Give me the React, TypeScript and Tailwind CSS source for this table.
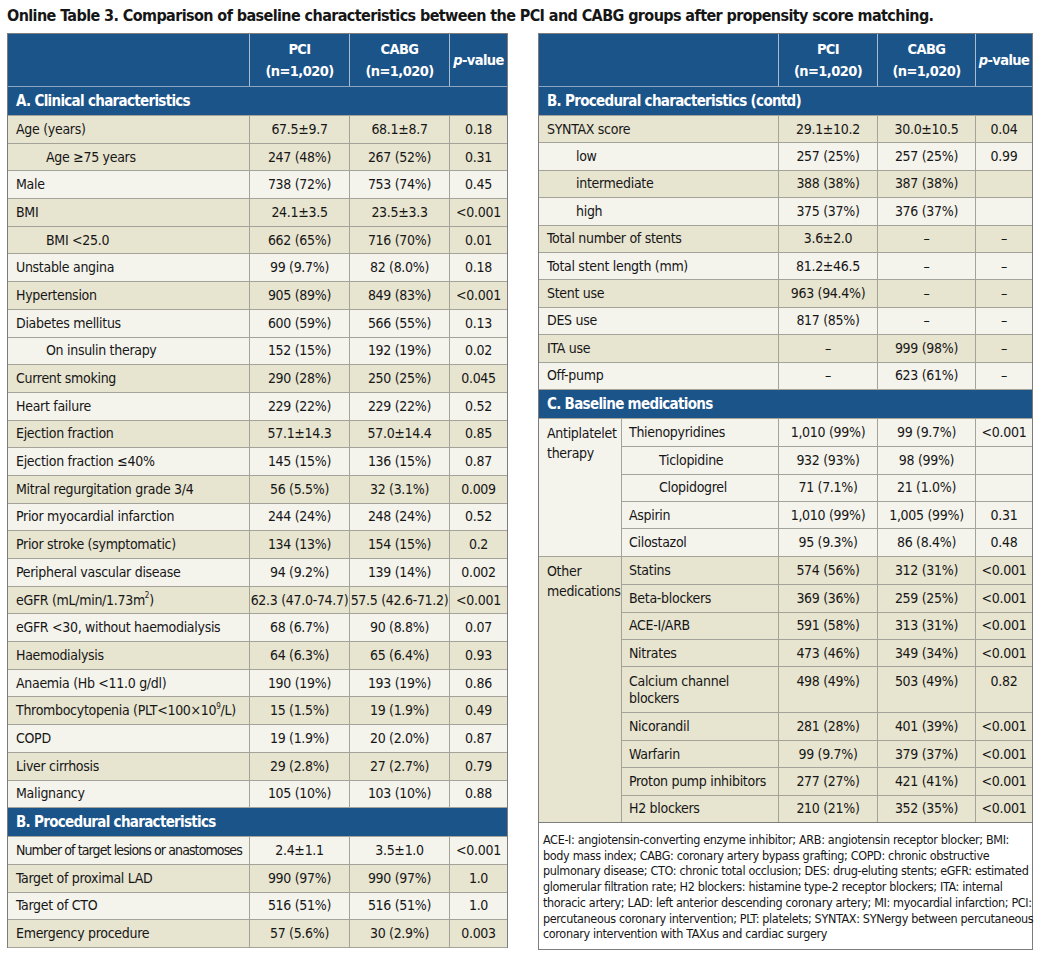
import React from "react";

type R = { l: React.ReactNode; a: string; b: string; p: string; c: 0 | 1; i?: boolean; tall?: boolean; t?: boolean };

const leftA: R[] = [
  { l: "Age (years)", a: "67.5±9.7", b: "68.1±8.7", p: "0.18", c: 1 },
  { l: "Age ≥75 years", a: "247 (48%)", b: "267 (52%)", p: "0.31", c: 1, i: true },
  { l: "Male", a: "738 (72%)", b: "753 (74%)", p: "0.45", c: 0 },
  { l: "BMI", a: "24.1±3.5", b: "23.5±3.3", p: "<0.001", c: 1 },
  { l: "BMI <25.0", a: "662 (65%)", b: "716 (70%)", p: "0.01", c: 1, i: true },
  { l: "Unstable angina", a: "99 (9.7%)", b: "82 (8.0%)", p: "0.18", c: 0 },
  { l: "Hypertension", a: "905 (89%)", b: "849 (83%)", p: "<0.001", c: 1 },
  { l: "Diabetes mellitus", a: "600 (59%)", b: "566 (55%)", p: "0.13", c: 0 },
  { l: "On insulin therapy", a: "152 (15%)", b: "192 (19%)", p: "0.02", c: 0, i: true },
  { l: "Current smoking", a: "290 (28%)", b: "250 (25%)", p: "0.045", c: 1 },
  { l: "Heart failure", a: "229 (22%)", b: "229 (22%)", p: "0.52", c: 0 },
  { l: "Ejection fraction", a: "57.1±14.3", b: "57.0±14.4", p: "0.85", c: 1 },
  { l: "Ejection fraction ≤40%", a: "145 (15%)", b: "136 (15%)", p: "0.87", c: 0 },
  { l: "Mitral regurgitation grade 3/4", a: "56 (5.5%)", b: "32 (3.1%)", p: "0.009", c: 1 },
  { l: "Prior myocardial infarction", a: "244 (24%)", b: "248 (24%)", p: "0.52", c: 0 },
  { l: "Prior stroke (symptomatic)", a: "134 (13%)", b: "154 (15%)", p: "0.2", c: 1 },
  { l: "Peripheral vascular disease", a: "94 (9.2%)", b: "139 (14%)", p: "0.002", c: 0 },
  {
    l: (
      <>
        eGFR (mL/min/1.73m<sup className="text-[8px]">2</sup>)
      </>
    ),
    a: "62.3 (47.0-74.7)",
    b: "57.5 (42.6-71.2)",
    p: "<0.001",
    c: 1,
  },
  { l: "eGFR <30, without haemodialysis", a: "68 (6.7%)", b: "90 (8.8%)", p: "0.07", c: 0 },
  { l: "Haemodialysis", a: "64 (6.3%)", b: "65 (6.4%)", p: "0.93", c: 1 },
  { l: "Anaemia (Hb <11.0 g/dl)", a: "190 (19%)", b: "193 (19%)", p: "0.86", c: 0 },
  {
    l: (
      <>
        Thrombocytopenia (PLT&lt;100×10<sup className="text-[8px]">9</sup>/L)
      </>
    ),
    a: "15 (1.5%)",
    b: "19 (1.9%)",
    p: "0.49",
    c: 1,
  },
  { l: "COPD", a: "19 (1.9%)", b: "20 (2.0%)", p: "0.87", c: 0 },
  { l: "Liver cirrhosis", a: "29 (2.8%)", b: "27 (2.7%)", p: "0.79", c: 1 },
  { l: "Malignancy", a: "105 (10%)", b: "103 (10%)", p: "0.88", c: 0 },
];

const leftB: R[] = [
  { l: "Number of target lesions or anastomoses", a: "2.4±1.1", b: "3.5±1.0", p: "<0.001", c: 0, t: true },
  { l: "Target of proximal LAD", a: "990 (97%)", b: "990 (97%)", p: "1.0", c: 1 },
  { l: "Target of CTO", a: "516 (51%)", b: "516 (51%)", p: "1.0", c: 0 },
  { l: "Emergency procedure", a: "57 (5.6%)", b: "30 (2.9%)", p: "0.003", c: 1 },
];

const rightB: R[] = [
  { l: "SYNTAX score", a: "29.1±10.2", b: "30.0±10.5", p: "0.04", c: 1 },
  { l: "low", a: "257 (25%)", b: "257 (25%)", p: "0.99", c: 0, i: true },
  { l: "intermediate", a: "388 (38%)", b: "387 (38%)", p: "", c: 1, i: true },
  { l: "high", a: "375 (37%)", b: "376 (37%)", p: "", c: 0, i: true },
  { l: "Total number of stents", a: "3.6±2.0", b: "–", p: "–", c: 1 },
  { l: "Total stent length (mm)", a: "81.2±46.5", b: "–", p: "–", c: 0 },
  { l: "Stent use", a: "963 (94.4%)", b: "–", p: "–", c: 1 },
  { l: "DES use", a: "817 (85%)", b: "–", p: "–", c: 0 },
  { l: "ITA use", a: "–", b: "999 (98%)", p: "–", c: 1 },
  { l: "Off-pump", a: "–", b: "623 (61%)", p: "–", c: 0 },
];

const anti: R[] = [
  { l: "Thienopyridines", a: "1,010 (99%)", b: "99 (9.7%)", p: "<0.001", c: 0 },
  { l: "Ticlopidine", a: "932 (93%)", b: "98 (99%)", p: "", c: 0, i: true },
  { l: "Clopidogrel", a: "71 (7.1%)", b: "21 (1.0%)", p: "", c: 0, i: true },
  { l: "Aspirin", a: "1,010 (99%)", b: "1,005 (99%)", p: "0.31", c: 0 },
  { l: "Cilostazol", a: "95 (9.3%)", b: "86 (8.4%)", p: "0.48", c: 0 },
];

const other: R[] = [
  { l: "Statins", a: "574 (56%)", b: "312 (31%)", p: "<0.001", c: 1 },
  { l: "Beta-blockers", a: "369 (36%)", b: "259 (25%)", p: "<0.001", c: 1 },
  { l: "ACE-I/ARB", a: "591 (58%)", b: "313 (31%)", p: "<0.001", c: 1 },
  { l: "Nitrates", a: "473 (46%)", b: "349 (34%)", p: "<0.001", c: 1 },
  {
    l: (
      <>
        Calcium channel
        <br />
        blockers
      </>
    ),
    a: "498 (49%)",
    b: "503 (49%)",
    p: "0.82",
    c: 1,
    tall: true,
  },
  { l: "Nicorandil", a: "281 (28%)", b: "401 (39%)", p: "<0.001", c: 1 },
  { l: "Warfarin", a: "99 (9.7%)", b: "379 (37%)", p: "<0.001", c: 1 },
  { l: "Proton pump inhibitors", a: "277 (27%)", b: "421 (41%)", p: "<0.001", c: 1 },
  { l: "H2 blockers", a: "210 (21%)", b: "352 (35%)", p: "<0.001", c: 1 },
];

const CELL = "flex items-center justify-center whitespace-nowrap border-l border-[#a4a39a]";

function LeftRow({ r }: { r: R }) {
  return (
    <div
      className={
        "grid grid-cols-[241px_100px_100px_58px] h-[27.7px] border-b border-[#a4a39a] " +
        (r.c ? "bg-[#e7e4cf]" : "bg-[#f4f3ec]")
      }
    >
      <div
        className={
          "flex items-center whitespace-nowrap " +
          (r.i ? "pl-[38px]" : "pl-[8px]") +
          (r.t ? " tracking-[-0.9px]" : "")
        }
      >
        {r.l}
      </div>
      <div className={CELL}>{r.a}</div>
      <div className={CELL}>{r.b}</div>
      <div className={CELL}>{r.p}</div>
    </div>
  );
}

function RightRow({ r }: { r: R }) {
  return (
    <div
      className={
        "grid grid-cols-[239px_99px_98px_57px] h-[27.4px] border-b border-[#a4a39a] " +
        (r.c ? "bg-[#e7e4cf]" : "bg-[#f4f3ec]")
      }
    >
      <div className={"flex items-center whitespace-nowrap " + (r.i ? "pl-[37px]" : "pl-[8px]")}>{r.l}</div>
      <div className={CELL}>{r.a}</div>
      <div className={CELL}>{r.b}</div>
      <div className={CELL}>{r.p}</div>
    </div>
  );
}

function MedRow({ r }: { r: R }) {
  const al = r.tall ? "items-start pt-[6px] leading-[17px]" : "items-center";
  return (
    <div
      className={
        "grid grid-cols-[156px_99px_98px_57px] border-t border-[#a4a39a] first:border-t-0 " +
        (r.tall ? "h-[46px]" : "h-[27.4px]")
      }
    >
      <div className={"flex whitespace-nowrap " + al + " " + (r.i ? "pl-[37px]" : "pl-[7px]")}>
        <span>{r.l}</span>
      </div>
      <div className={"flex justify-center whitespace-nowrap border-l border-[#a4a39a] " + al}>{r.a}</div>
      <div className={"flex justify-center whitespace-nowrap border-l border-[#a4a39a] " + al}>{r.b}</div>
      <div className={"flex justify-center whitespace-nowrap border-l border-[#a4a39a] " + al}>{r.p}</div>
    </div>
  );
}

function Header({ cols }: { cols: string }) {
  return (
    <div
      className={
        "grid h-[53px] bg-[#1b5489] text-white font-bold text-[14.5px] tracking-[-0.6px] leading-[22px] border-b border-[#8ea5c1] " +
        cols
      }
    >
      <div />
      <div className="flex flex-col items-center justify-center border-l border-[#a9bcd2] whitespace-nowrap">
        <span>PCI</span>
        <span>(n=1,020)</span>
      </div>
      <div className="flex flex-col items-center justify-center border-l border-[#a9bcd2] whitespace-nowrap">
        <span>CABG</span>
        <span>(n=1,020)</span>
      </div>
      <div className="flex items-center justify-center border-l border-[#a9bcd2] whitespace-nowrap">
        <span>
          <i>p</i>-value
        </span>
      </div>
    </div>
  );
}

function Bar({ children }: { children: React.ReactNode }) {
  return (
    <div className="h-[29px] bg-[#1b5489] text-white font-bold text-[15px] tracking-[-0.7px] flex items-center pl-[8px] border-b border-[#a4a39a] whitespace-nowrap">
      {children}
    </div>
  );
}

export default function App() {
  return (
    <div className="w-[1050px] h-[953px] overflow-hidden bg-white text-[#161616] font-['DejaVu_Sans_Condensed','Liberation_Sans_Narrow',sans-serif] text-[14px] tracking-[-0.3px]">
      <div className="h-[33px] pl-[7px] pt-[4px] text-[16px] tracking-[-0.6px] font-bold leading-[24px] whitespace-nowrap">
        Online Table 3. Comparison of baseline characteristics between the PCI and CABG groups after propensity score matching.
      </div>
      <div className="flex items-start pl-[7px] gap-[30px]">
        {/* Left table */}
        <div className="w-[501px] border-x border-t border-[#7d7d7d]">
          <Header cols="grid-cols-[241px_100px_100px_58px]" />
          <Bar>A. Clinical characteristics</Bar>
          {leftA.map((r, k) => (
            <LeftRow key={k} r={r} />
          ))}
          <Bar>B. Procedural characteristics</Bar>
          {leftB.map((r, k) => (
            <LeftRow key={k} r={r} />
          ))}
        </div>

        {/* Right table */}
        <div className="w-[495px] border-x border-t border-[#7d7d7d]">
          <Header cols="grid-cols-[239px_99px_98px_57px]" />
          <Bar>B. Procedural characteristics (contd)</Bar>
          {rightB.map((r, k) => (
            <RightRow key={k} r={r} />
          ))}
          <Bar>C. Baseline medications</Bar>
          <div className="flex bg-[#f4f3ec] border-b border-[#a4a39a]">
            <div className="w-[82px] pl-[8px] pt-[4px] leading-[20px]">
              Antiplatelet
              <br />
              therapy
            </div>
            <div className="flex-1 border-l border-[#a4a39a]">
              {anti.map((r, k) => (
                <MedRow key={k} r={r} />
              ))}
            </div>
          </div>
          <div className="flex bg-[#e7e4cf] border-b border-[#7d7d7d]">
            <div className="w-[82px] pl-[8px] pt-[4px] leading-[20px]">
              Other
              <br />
              medications
            </div>
            <div className="flex-1 border-l border-[#a4a39a]">
              {other.map((r, k) => (
                <MedRow key={k} r={r} />
              ))}
            </div>
          </div>
          <div className="bg-white pl-[4px] pt-[9px] pb-[7px] text-[12.5px] tracking-[-0.35px] leading-[15.7px] whitespace-nowrap border-b border-[#7d7d7d]">
            ACE-I: angiotensin-converting enzyme inhibitor; ARB: angiotensin receptor blocker; BMI:
            <br />
            body mass index; CABG: coronary artery bypass grafting; COPD: chronic obstructive
            <br />
            pulmonary disease; CTO: chronic total occlusion; DES: drug-eluting stents; eGFR: estimated
            <br />
            glomerular filtration rate; H2 blockers: histamine type-2 receptor blockers; ITA: internal
            <br />
            thoracic artery; LAD: left anterior descending coronary artery; MI: myocardial infarction; PCI:
            <br />
            percutaneous coronary intervention; PLT: platelets; SYNTAX: SYNergy between percutaneous
            <br />
            coronary intervention with TAXus and cardiac surgery
          </div>
        </div>
      </div>
    </div>
  );
}
